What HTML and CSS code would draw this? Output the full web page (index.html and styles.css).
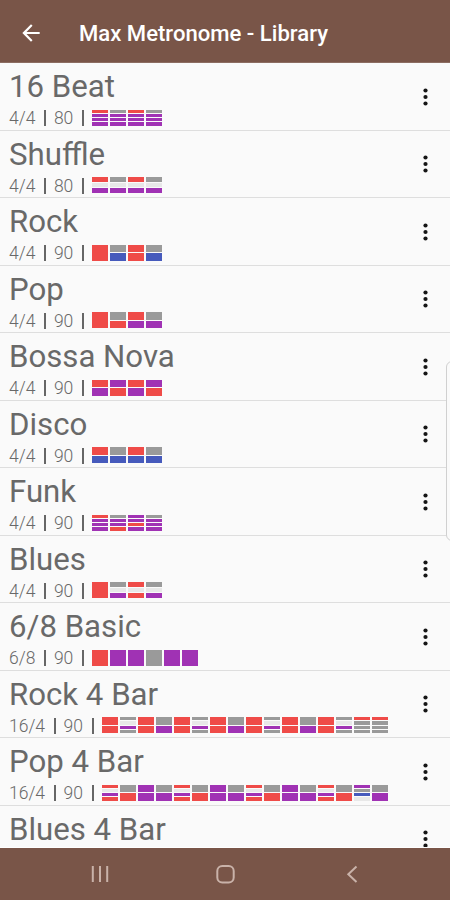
FILE: index.html
```
<!DOCTYPE html>
<html lang="en">
<head>
  <meta charset="UTF-8" />
  <meta name="viewport" content="width=device-width, initial-scale=1.0" />
  <title>Max Metronome - Library</title>
  <link rel="stylesheet" href="styles.css">
</head>
<body>

<header>
  <svg class="back" viewBox="0 0 24 24" width="26" height="26">
    <path d="M20 11H7.83l5.59-5.59L12 4l-8 8 8 8 1.41-1.41L7.83 13H20v-2z" />
  </svg>
  <h1>Max Metronome - Library</h1>
</header>

<main id="library"></main>

<div class="edge-handle"></div>

<footer>
  <svg viewBox="0 0 24 24" width="24" height="24">
    <path d="M4.8 4v16M12 4v16M19.2 4v16" />
  </svg>
  <svg viewBox="0 0 24 24" width="24" height="24">
    <rect x="4.3" y="4" width="16.4" height="16.4" rx="5" />
  </svg>
  <svg viewBox="0 0 24 24" width="24" height="24">
    <path d="M18.5 4.5L10.3 12.2l8.2 7.7" />
  </svg>
</footer>

<script src="library.js"></script>
</body>
</html>
```

FILE: styles.css
```
* {
  box-sizing: border-box;
}
body {
  margin: 0;
  height: 900px;
  display: flex;
  flex-direction: column;
  overflow: hidden;
  position: relative;
  font-family: Roboto, sans-serif;
  background-color: #fafafa;
  color: #696969;
}
header {
  flex: none;
  height: 63px;
  padding: 3px 18px 0;
  display: flex;
  align-items: center;
  background-color: #795548;
  border-bottom: 1px solid #8c6d62;
}
.back {
  fill: #fff;
}
h1 {
  margin: 0 0 0 35px;
  font-size: 22.1px;
  font-weight: 500;
  line-height: 30px;
  color: #fff;
  white-space: nowrap;
}
main {
  flex: 1;
  min-height: 0;
  overflow: hidden;
  border-bottom: 1px solid #fff;
}
.rhythm {
  height: 67.5px;
  padding-left: 9px;
  display: flex;
  justify-content: space-between;
  border-bottom: 1px solid #dedede;
}
.name {
  margin: 0;
  padding-top: 5px;
  font-size: 31.2px;
  font-weight: 400;
  line-height: 38px;
  white-space: nowrap;
}
.info {
  height: 24px;
  display: flex;
  align-items: center;
  font-size: 17.5px;
  font-weight: 300;
  white-space: pre;
}
.info i {
  width: 2px;
  height: 16px;
  margin: 0 8px 0 8.5px;
  background-color: #666;
}
.beats {
  display: flex;
  gap: 2px;
  margin-top: -1px;
}
.beat {
  width: 16px;
  height: 16px;
  display: flex;
  flex-direction: column;
  gap: 1px;
}
.beat span {
  flex: 1;
}
.r { background-color: #ef4b48; }
.g { background-color: #9a9a9a; }
.p { background-color: #a032b4; }
.b { background-color: #465abc; }
.n { background-color: #e8e8e8; }
.more {
  width: 50px;
  padding-top: 24.5px;
}
.more svg {
  display: block;
  fill: #151515;
}
.edge-handle {
  position: absolute;
  top: 361px;
  right: -8px;
  width: 12px;
  height: 180px;
  border: 1px solid #d0d0d0;
  border-radius: 6px;
  background-color: #fafafa;
}
footer {
  flex: none;
  height: 52px;
  padding: 0 37px;
  display: flex;
  justify-content: space-around;
  align-items: center;
  background-color: #795548;
}
footer svg {
  fill: none;
  stroke: #c9b2a9;
  stroke-width: 2;
}
```

FILE: library.js
```
// One word per beat, one letter per subdivision:
// r = red, g = grey, p = purple, b = blue, n = silent
const rhythms = [
  { name: '16 Beat', time: '4/4', bpm: 80, beats: 'rppp gppp rppp gppp' },
  { name: 'Shuffle', time: '4/4', bpm: 80, beats: 'rnp gnp rnp gnp' },
  { name: 'Rock', time: '4/4', bpm: 90, beats: 'r gb rr gb' },
  { name: 'Pop', time: '4/4', bpm: 90, beats: 'r gr rp gp' },
  { name: 'Bossa Nova', time: '4/4', bpm: 90, beats: 'rp pr rp pr' },
  { name: 'Disco', time: '4/4', bpm: 90, beats: 'rb gb rb gb' },
  { name: 'Funk', time: '4/4', bpm: 90, beats: 'rppp gppr pprp gppp' },
  { name: 'Blues', time: '4/4', bpm: 90, beats: 'r gnp rnr gnp' },
  { name: '6/8 Basic', time: '6/8', bpm: 90, beats: 'r p p g p p' },
  { name: 'Rock 4 Bar', time: '16/4', bpm: 90, beats: 'rr gnpg rr gp rr gnpg rr gp rr gnpg rr gp rr gnpg rggg rggg' },
  { name: 'Pop 4 Bar', time: '16/4', bpm: 90, beats: 'rnpr gr pp gp rnpr gr pp gp rnpr gr pp gp rnpr gr pgbn gp' },
  { name: 'Blues 4 Bar' }
];

const library = document.getElementById('library');

function infoLine(rhythm) {
  if (!rhythm.beats) return '';
  const beats = rhythm.beats.split(' ').map(beat => {
    const parts = beat.split('').map(c => `<span class="${c}"></span>`).join('');
    return `<div class="beat">${parts}</div>`;
  }).join('');
  return `<div class="info">${rhythm.time}<i></i>${rhythm.bpm}<i></i><div class="beats">${beats}</div></div>`;
}

rhythms.forEach(rhythm => {
  library.innerHTML += `
    <div class="rhythm">
      <div>
        <h2 class="name">${rhythm.name}</h2>
        ${infoLine(rhythm)}
      </div>
      <div class="more">
        <svg viewBox="0 0 50 18" width="50" height="18">
          <circle cx="25.5" cy="2.5" r="2.1" /><circle cx="25.5" cy="9" r="2.1" /><circle cx="25.5" cy="15.5" r="2.1" />
        </svg>
      </div>
    </div>`;
});
```
